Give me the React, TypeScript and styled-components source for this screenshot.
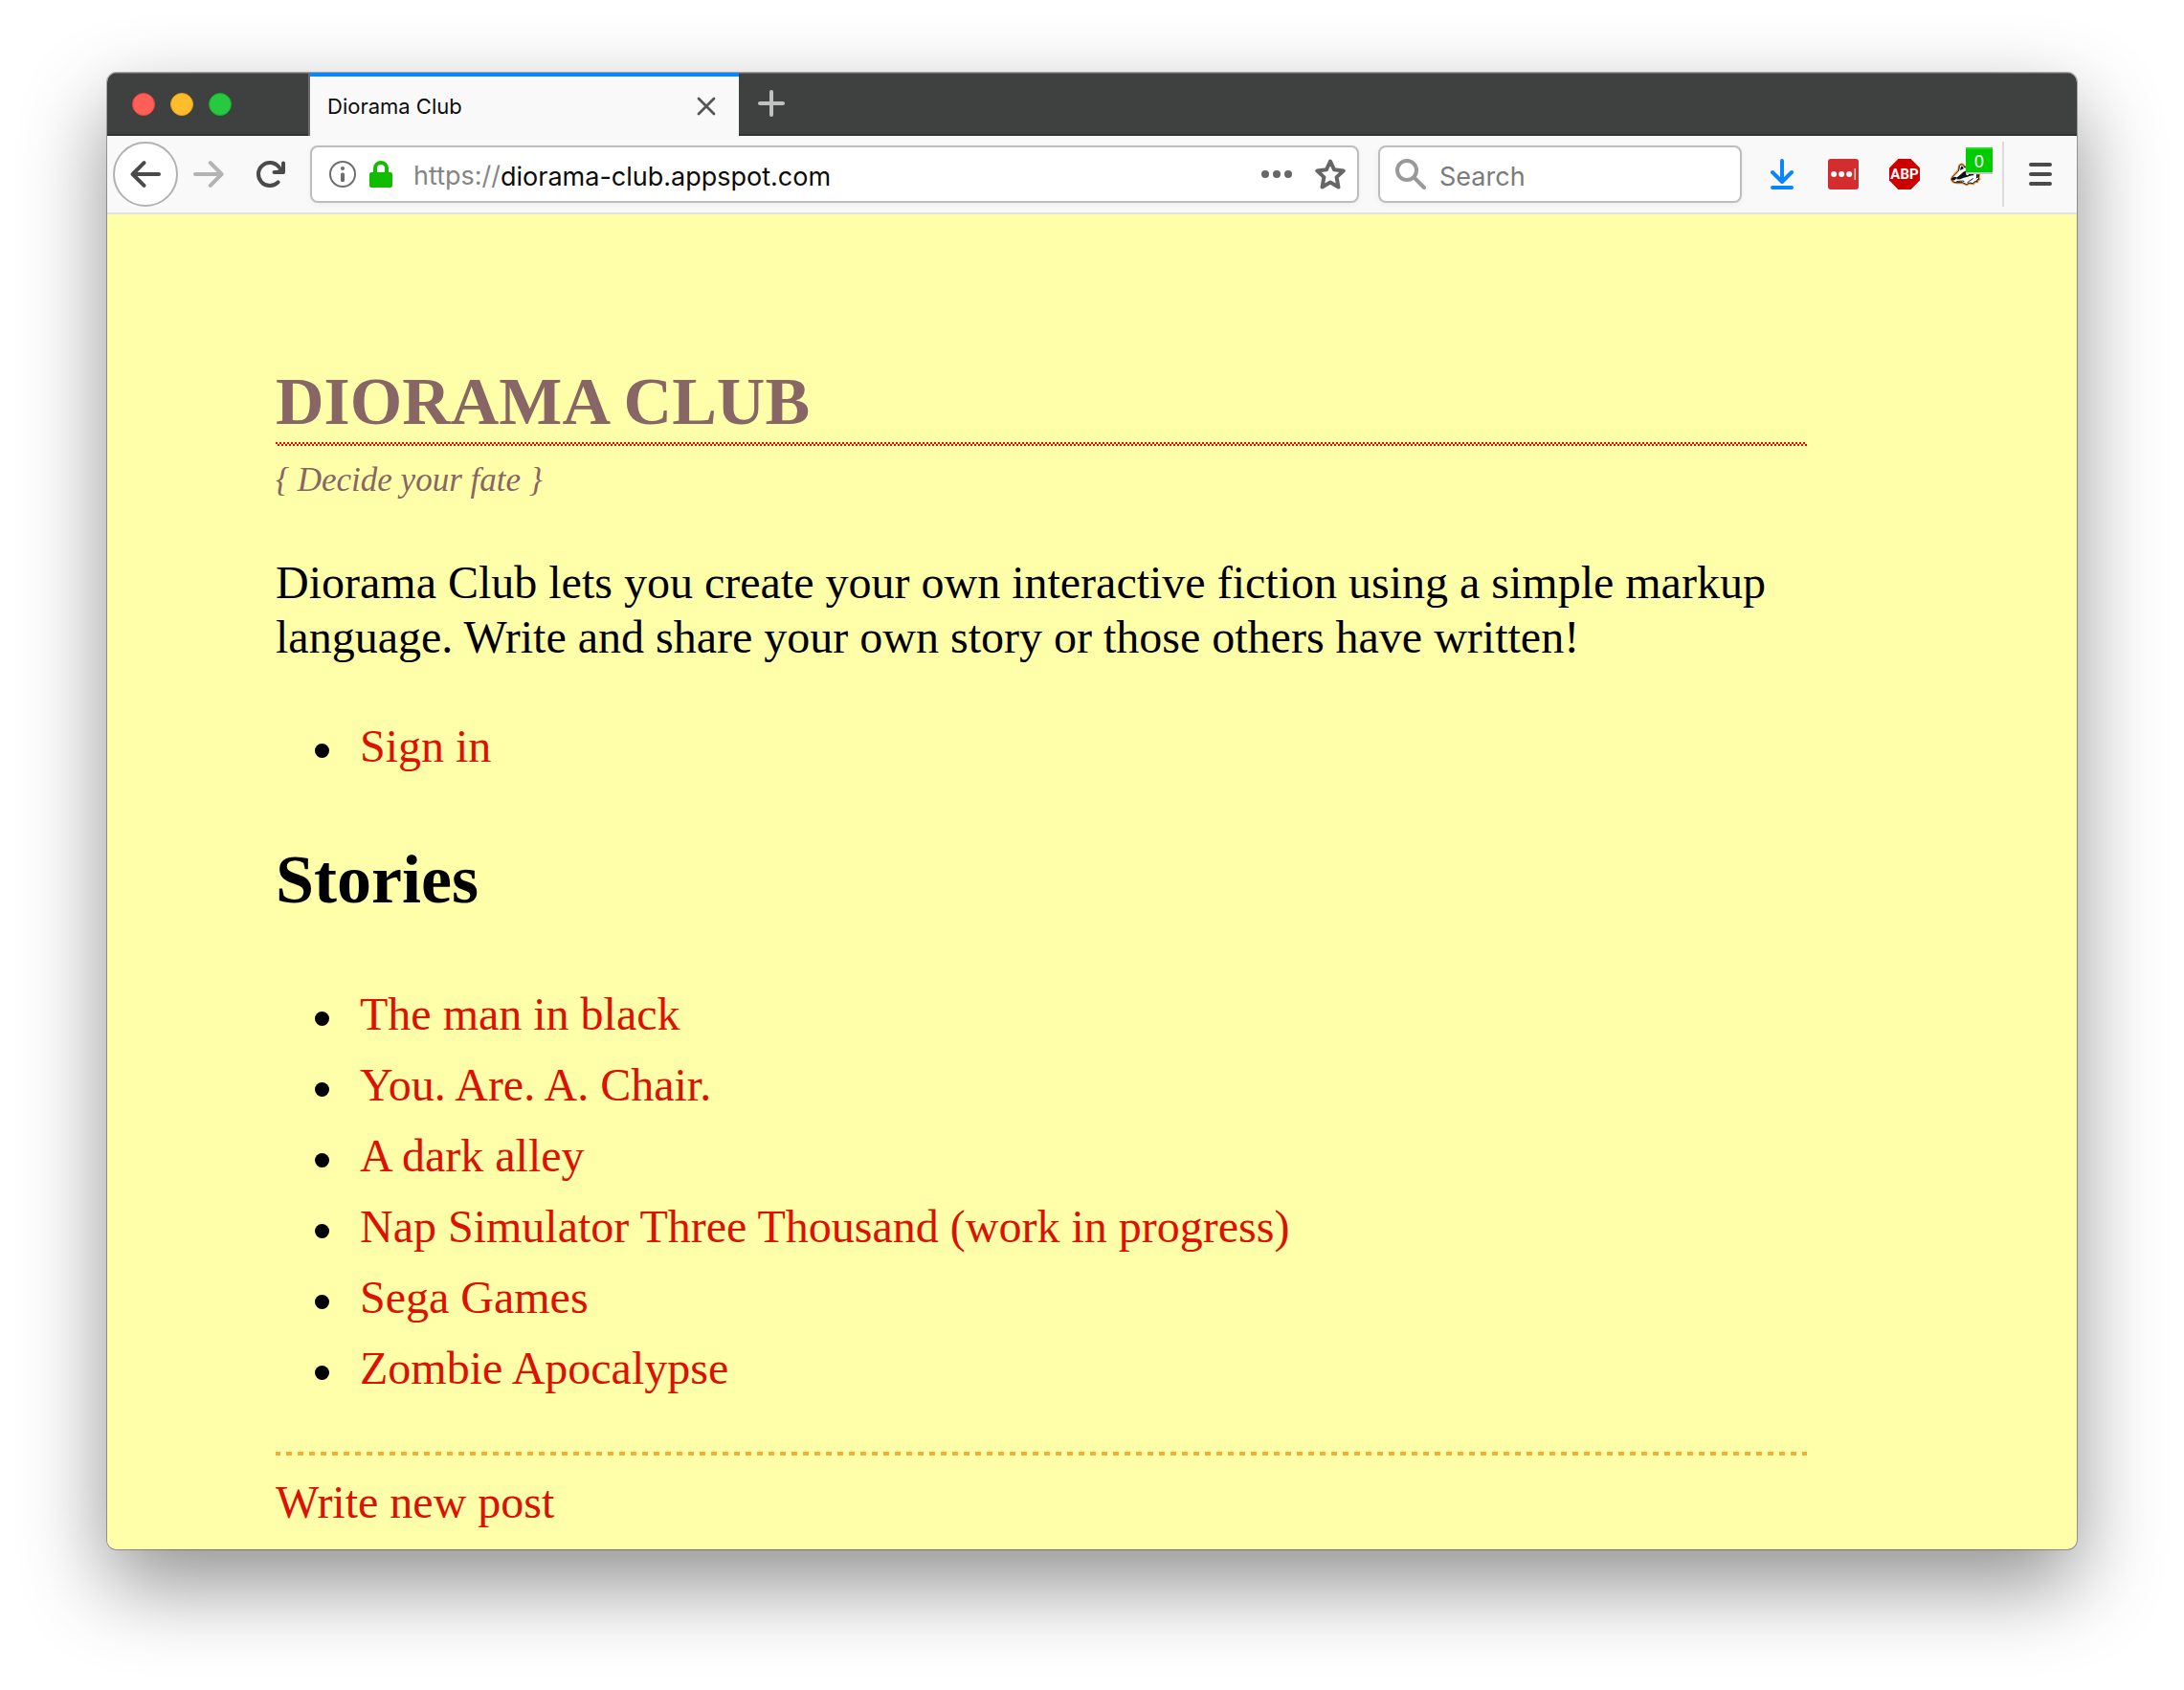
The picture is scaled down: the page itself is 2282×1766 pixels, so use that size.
import React from "react";
import styled, { createGlobalStyle } from "styled-components";

const GlobalStyle = createGlobalStyle`
  *, *::before, *::after { box-sizing: border-box; }
  body { margin: 0; background: #ffffff; }
`;

const uiFont = `Inter, "Liberation Sans", sans-serif`;
const serifFont = `"Liberation Serif", "Times New Roman", serif`;

const Desktop = styled.div`
  padding: 76px 112px 148px;
`;

const Window = styled.div`
  overflow: hidden;
  border-radius: 10px;
  background: #ffffaa;
  box-shadow: 0 0 0 1px rgba(0, 0, 0, 0.3), 0 36px 88px rgba(0, 0, 0, 0.44);
`;

const TitleBar = styled.header`
  display: flex;
  height: 66px;
  background: #3f4140;
  box-shadow: inset 0 1px 0 #6a6c6b, inset 0 -2px 0 #323232;
  font-family: ${uiFont};
`;

const WindowControls = styled.div`
  display: flex;
  align-items: center;
  gap: 16px;
  width: 210px;
  padding-left: 26px;
`;

const Light = styled.button<{ $fill: string; $edge: string }>`
  width: 24px;
  height: 24px;
  padding: 0;
  border: 1px solid ${(p) => p.$edge};
  border-radius: 50%;
  background: ${(p) => p.$fill};
`;

const Tab = styled.div`
  display: flex;
  align-items: center;
  justify-content: space-between;
  width: 450px;
  padding: 4px 20px 0 18px;
  border-left: 2px solid #6b6c6b;
  background: linear-gradient(#0a84ff 4px, #f9f9fa 4px);
`;

const TabTitle = styled.span`
  color: #0c0c0d;
  font-size: 22px;
  line-height: 28px;
`;

const IconButton = styled.button<{ $width: number }>`
  position: relative;
  display: flex;
  align-items: center;
  justify-content: center;
  flex: none;
  width: ${(p) => p.$width}px;
  padding: 0;
  border: 0;
  background: none;
`;

const NewTabButton = styled(IconButton)`
  padding-bottom: 2px;
`;

const ToolBar = styled.nav`
  display: flex;
  align-items: center;
  height: 82px;
  padding: 0 6px;
  border-bottom: 2px solid #e1e1e2;
  background: #f9f9fa;
  font-family: ${uiFont};
`;

const BackButton = styled.button`
  display: flex;
  align-items: center;
  justify-content: center;
  flex: none;
  width: 68px;
  height: 68px;
  padding: 0;
  border: 2px solid #b1b1b1;
  border-radius: 50%;
  background: #ffffff;
`;

const Field = styled.div`
  display: flex;
  align-items: center;
  height: 60px;
  border: 2px solid #bdbdbd;
  border-radius: 8px;
  background: #ffffff;
  box-shadow: 0 2px 6px rgba(0, 0, 0, 0.05);
`;

const AddressField = styled(Field)`
  flex: 1;
  min-width: 0;
  margin: 0 20px 0 10px;
  padding: 0 12px 0 18px;
`;

const SearchField = styled(Field)`
  width: 380px;
  margin-right: 10px;
  padding: 0 16px;
  gap: 14px;
`;

const FieldIcons = styled.div`
  display: flex;
  align-items: center;
  gap: 14px;
  margin-right: 22px;
`;

const Scheme = styled.label`
  padding-top: 4px;
  color: #858585;
  font-size: 27px;
  line-height: 36px;
`;

const TextInput = styled.input`
  flex: 1;
  min-width: 0;
  height: 40px;
  padding: 4px 0 0;
  border: 0;
  outline: 0;
  background: none;
  color: #0c0c0d;
  font-family: ${uiFont};
  font-size: 27px;
  line-height: 36px;

  &::placeholder {
    color: #7b7b7b;
    opacity: 1;
  }
`;

const FieldActions = styled.div`
  display: flex;
  align-items: center;
  gap: 24px;
`;

const Badge = styled.span`
  position: absolute;
  top: -12px;
  right: 4px;
  width: 28px;
  height: 26px;
  border-top: 2px solid #33d633;
  background: #00cc00;
  box-shadow: 0 2px 0 #c8c8c8;
  color: #ffffff;
  font-family: "Noto Sans", sans-serif;
  font-size: 18px;
  line-height: 24px;
  text-align: center;
`;

const Separator = styled.div`
  width: 2px;
  height: 68px;
  margin: 0 6px;
  background: #dcdcdc;
`;

const Page = styled.main`
  max-width: 1776px;
  padding: 158px 0 20px 176px;
  background: #ffffaa;
  color: #000000;
  font-family: ${serifFont};
  font-size: 48px;
  line-height: 58px;
`;

const SiteTitle = styled.h1`
  margin: 0;
  padding-bottom: 8px;
  background: conic-gradient(transparent 25%, #ff0000 25% 50%, transparent 50% 75%, #ff0000 75%)
    left bottom / 4px 4px repeat-x;
  color: #886666;
  font-size: 70px;
  line-height: 76px;
  text-transform: uppercase;
`;

const Tagline = styled.p`
  margin: 16px 0 58px;
  color: #886666;
  font-size: 35px;
  font-style: italic;
  line-height: 40px;
`;

const Intro = styled.p`
  margin: 0 0 57px;
  line-height: 57px;
`;

const Heading = styled.h2`
  margin: 67px 0 69px;
  font-size: 72px;
  line-height: 86px;
`;

const LinkList = styled.ul`
  display: flex;
  flex-direction: column;
  gap: 16px;
  margin: 0;
  padding: 0 0 0 41px;
  list-style: none;
`;

const LinkItem = styled.li`
  display: flex;
  align-items: center;
  gap: 32px;

  &::before {
    content: "";
    width: 15px;
    height: 15px;
    margin-top: 9px;
    border-radius: 50%;
    background: #000000;
  }
`;

const PageLink = styled.a`
  color: #dd1100;
  text-decoration: none;
`;

const PageFooter = styled.footer`
  margin-top: 58px;
  padding-top: 24px;
  background: repeating-linear-gradient(90deg, #ffaa33 0 5px, transparent 5px 11px, #ffaa33 11px 12px)
    left top / 100% 4px no-repeat;
`;

const ink = "#4a4a4a";

const BackIcon = () => (
  <svg width="32" height="32" viewBox="0 0 32 32" fill="none" stroke={ink} strokeWidth="4" strokeLinecap="round" strokeLinejoin="round">
    <path d="M30 16H3M14.5 4.2L2.6 16l11.9 11.8" />
  </svg>
);

const ForwardIcon = () => (
  <svg width="32" height="32" viewBox="0 0 32 32" fill="none" stroke="#b3b3b3" strokeWidth="4" strokeLinecap="round" strokeLinejoin="round">
    <path d="M2 16h27M17.8 4.2L29.6 16 17.8 27.8" />
  </svg>
);

const ReloadIcon = () => (
  <svg width="32" height="32" viewBox="0 0 32 32" fill="none" stroke={ink} strokeWidth="4" strokeLinecap="round" strokeLinejoin="round">
    <path d="M24.6 24.4A12 12 0 1 1 25.4 8.6" />
    <path d="M30 4.5V14H20.500" />
    <path d="M30 6v8h-8z" fill={ink} stroke="none" />
  </svg>
);

const InfoIcon = () => (
  <svg width="28" height="28" viewBox="0 0 28 28">
    <circle cx="14" cy="14" r="13" fill="none" stroke="#6e6e6e" strokeWidth="2" />
    <circle cx="14" cy="8" r="2.100" fill="#6e6e6e" />
    <rect x="12" y="12.500" width="4" height="9.500" rx="1.500" fill="#6e6e6e" />
  </svg>
);

const LockIcon = () => (
  <svg width="24" height="28" viewBox="0 0 24 28">
    <path d="M6 14V8a6 6 0 0 1 12 0v6" fill="none" stroke="#12bc00" strokeWidth="4" />
    <rect y="12" width="24" height="16" rx="2" fill="#12bc00" />
  </svg>
);

const DotsIcon = () => (
  <svg width="32" height="8" viewBox="0 0 32 8" fill="#666666">
    <circle cx="4" cy="4" r="4" />
    <circle cx="16" cy="4" r="4" />
    <circle cx="28" cy="4" r="4" />
  </svg>
);

const StarIcon = () => (
  <svg width="32" height="32" viewBox="0 0 32 32" fill="none" stroke="#666666" strokeWidth="4" strokeLinejoin="round">
    <path d="M16 2.500l4.100 8.800 9.600 1.200-7.100 6.600 1.900 10.400L16 24.600l-8.500 4.900 1.900-10.400-7.100-6.600 9.600-1.200z" />
  </svg>
);

const SearchIcon = () => (
  <svg width="32" height="32" viewBox="0 0 32 32" fill="none" stroke="#999999" strokeWidth="4" strokeLinecap="round">
    <circle cx="12" cy="12" r="10" />
    <path d="M19.500 19.500L30 30" />
  </svg>
);

const DownloadIcon = () => (
  <svg width="24" height="32" viewBox="0 0 24 32" fill="none" stroke="#0a84ff" strokeWidth="4" strokeLinecap="round" strokeLinejoin="round">
    <path d="M12 2v21M2 14l10 10 10-10M2 30h20" />
  </svg>
);

const PasswordIcon = () => (
  <svg width="32" height="32" viewBox="0 0 32 32">
    <rect width="32" height="32" rx="3" fill="#d32d2f" />
    <g fill="#ffffff">
      <circle cx="6.200" cy="16" r="3" />
      <circle cx="14.200" cy="16" r="3" />
      <circle cx="22.200" cy="16" r="3" />
    </g>
    <rect x="27.500" y="10" width="1.500" height="12" fill="#f3c4c4" />
  </svg>
);

const AbpLabel = styled.text`
  fill: #ffffff;
  font-family: Roboto, sans-serif;
  font-size: 15px;
  font-weight: 700;
  text-anchor: middle;
`;

const AbpIcon = () => (
  <svg width="32" height="32" viewBox="0 0 32 32">
    <path d="M9.400 0h13.200L32 9.400v13.200L22.600 32H9.400L0 22.600V9.400z" fill="#cc0000" />
    <AbpLabel x="16" y="21">ABP</AbpLabel>
  </svg>
);

const badgerHead =
  "M4 64C4 57 16 49 26 37L28 23C31 16 40 16 44 27C62 21 80 32 89 50L87 60L90 63L83 66L84 71L76 71L71 77L60 75L50 80L38 74L22 74C12 75 6 71 4 64Z";

const BadgerIcon = () => (
  <svg width="32" height="32" viewBox="0 0 96 96" fill="none" strokeLinejoin="round" strokeLinecap="round">
    <path d={badgerHead} stroke="#f08a24" strokeWidth="9" />
    <path d={badgerHead} fill="#ffffff" stroke="#111111" strokeWidth="3" />
    <path d="M30 36L33 24C37 21 41 26 41 31Z" fill="#111111" />
    <path d="M5 62C7 57 14 54 19 58C18 65 12 69 7 67Z" fill="#111111" />
    <path d="M19 58C30 54 36 40 52 36C62 36 72 42 74 52C64 50 58 56 48 58C38 60 32 66 19 64Z" fill="#111111" />
    <path d="M80 40C86 46 88 52 86 58L80 62C82 54 82 48 80 40Z" fill="#111111" />
    <circle cx="53" cy="48" r="4" fill="#ffffff" />
    <path d="M20 71C30 70 36 68 42 70M62 68l8-6M54 74l6-6" stroke="#111111" strokeWidth="3" />
  </svg>
);

const MenuIcon = () => (
  <svg width="24" height="24" viewBox="0 0 24 24" stroke={ink} strokeWidth="4" strokeLinecap="round">
    <path d="M2 2h20M2 12h20M2 22h20" />
  </svg>
);

const CloseIcon = () => (
  <svg width="20" height="20" viewBox="0 0 20 20" stroke="#555555" strokeWidth="2.800" strokeLinecap="round">
    <path d="M2 2l16 16M18 2L2 18" />
  </svg>
);

const PlusIcon = () => (
  <svg width="28" height="28" viewBox="0 0 28 28" stroke="#c0c2c1" strokeWidth="4" strokeLinecap="round">
    <path d="M14 2v24M2 14h24" />
  </svg>
);

const stories = [
  "The man in black",
  "You. Are. A. Chair.",
  "A dark alley",
  "Nap Simulator Three Thousand (work in progress)",
  "Sega Games",
  "Zombie Apocalypse",
];

export default function App() {
  return (
    <Desktop>
      <GlobalStyle />
      <Window>
        <TitleBar>
          <WindowControls>
            <Light $fill="#ff5f57" $edge="#e2463f" aria-label="Close window" />
            <Light $fill="#ffbd2e" $edge="#e1a116" aria-label="Minimize window" />
            <Light $fill="#28c940" $edge="#12ac28" aria-label="Zoom window" />
          </WindowControls>
          <Tab>
            <TabTitle>Diorama Club</TabTitle>
            <IconButton $width={28} aria-label="Close tab">
              <CloseIcon />
            </IconButton>
          </Tab>
          <NewTabButton $width={68} aria-label="New tab">
            <PlusIcon />
          </NewTabButton>
        </TitleBar>
        <ToolBar aria-label="Browser toolbar">
          <BackButton aria-label="Back">
            <BackIcon />
          </BackButton>
          <IconButton $width={64} aria-label="Forward">
            <ForwardIcon />
          </IconButton>
          <IconButton $width={64} aria-label="Reload">
            <ReloadIcon />
          </IconButton>
          <AddressField>
            <FieldIcons>
              <InfoIcon />
              <LockIcon />
            </FieldIcons>
            <Scheme htmlFor="address">https://</Scheme>
            <TextInput id="address" defaultValue="diorama-club.appspot.com" spellCheck={false} />
            <FieldActions>
              <IconButton $width={32} aria-label="Page actions">
                <DotsIcon />
              </IconButton>
              <IconButton $width={32} aria-label="Bookmark this page">
                <StarIcon />
              </IconButton>
            </FieldActions>
          </AddressField>
          <SearchField>
            <SearchIcon />
            <TextInput aria-label="Search" placeholder="Search" />
          </SearchField>
          <IconButton $width={64} aria-label="Downloads">
            <DownloadIcon />
          </IconButton>
          <IconButton $width={64} aria-label="Passwords">
            <PasswordIcon />
          </IconButton>
          <IconButton $width={64} aria-label="Ad blocker">
            <AbpIcon />
          </IconButton>
          <IconButton $width={64} aria-label="Tracker blocker">
            <BadgerIcon />
            <Badge>0</Badge>
          </IconButton>
          <Separator />
          <IconButton $width={64} aria-label="Menu">
            <MenuIcon />
          </IconButton>
        </ToolBar>
        <Page>
          <SiteTitle>Diorama Club</SiteTitle>
          <Tagline>{"{ Decide your fate }"}</Tagline>
          <Intro>
            Diorama Club lets you create your own interactive fiction using a simple markup language.
            Write and share your own story or those others have written!
          </Intro>
          <LinkList>
            <LinkItem>
              <PageLink href="#signin">Sign in</PageLink>
            </LinkItem>
          </LinkList>
          <Heading>Stories</Heading>
          <LinkList>
            {stories.map((title) => (
              <LinkItem key={title}>
                <PageLink href="#story">{title}</PageLink>
              </LinkItem>
            ))}
          </LinkList>
          <PageFooter>
            <PageLink href="#new">Write new post</PageLink>
          </PageFooter>
        </Page>
      </Window>
    </Desktop>
  );
}
